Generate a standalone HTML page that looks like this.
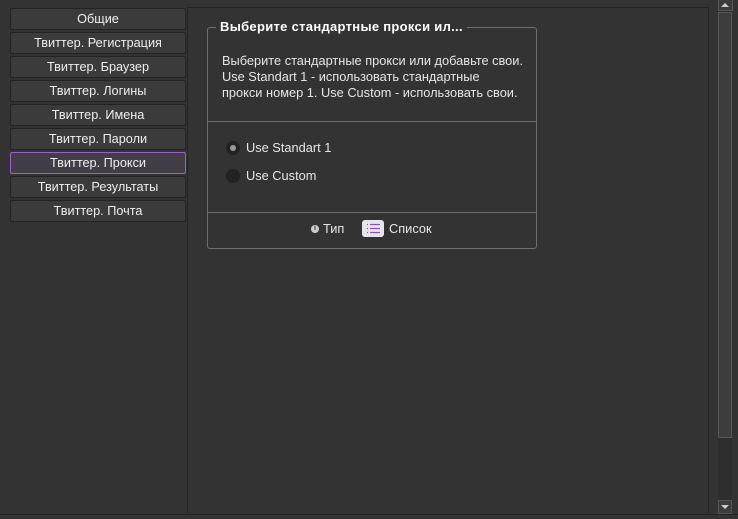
<!DOCTYPE html>
<html><head><meta charset="utf-8"><style>
body{margin:0;width:738px;height:519px;background:#333;overflow:hidden;position:relative;font-family:"Liberation Sans","DejaVu Sans",sans-serif;font-size:12px;color:#e6e6e6}
.a{position:absolute}
.btn{position:absolute;left:10px;width:174px;height:20px;background:#3b3b3b;border:1px solid #232323;border-radius:2px;text-align:center;line-height:20px;color:#eee;font-size:12.7px}
.sel{background:#433d48;border-color:#9b60c9}
</style></head><body>
<div class="a" style="left:187px;top:7px;width:1px;height:507px;background:#232323"></div>
<div class="a" style="left:187px;top:7px;width:521px;height:1px;background:#232323"></div>
<div class="a" style="left:708px;top:7px;width:1px;height:507px;background:#232323"></div>
<div class="a" style="left:0;top:514px;width:738px;height:1px;background:#232323"></div>
<div class="btn" style="top:8px">Общие</div>
<div class="btn" style="top:32px">Твиттер. Регистрация</div>
<div class="btn" style="top:56px">Твиттер. Браузер</div>
<div class="btn" style="top:80px">Твиттер. Логины</div>
<div class="btn" style="top:104px">Твиттер. Имена</div>
<div class="btn" style="top:128px">Твиттер. Пароли</div>
<div class="btn sel" style="top:152px">Твиттер. Прокси</div>
<div class="btn" style="top:176px">Твиттер. Результаты</div>
<div class="btn" style="top:200px">Твиттер. Почта</div>

<div class="a" style="left:207px;top:27px;width:328px;height:220px;border:1px solid #6e6e6e;border-radius:3px"></div>
<div class="a" style="left:216px;top:18px;padding:0 4px;background:#333;font-weight:bold;color:#fff;font-size:13px;letter-spacing:0.3px;line-height:18px">Выберите стандартные прокси ил...</div>
<div class="a" style="left:222px;top:53px;line-height:16px;font-size:12.8px;color:#e6e6e6">Выберите стандартные прокси или добавьте свои.<br>Use Standart 1 - использовать стандартные<br>прокси номер 1. Use Custom - использовать свои.</div>
<div class="a" style="left:208px;top:121px;width:328px;height:1px;background:#6e6e6e"></div>
<div class="a" style="left:226px;top:141px;width:14px;height:14px;border-radius:50%;background:#222"></div>
<div class="a" style="left:230px;top:145px;width:6px;height:6px;border-radius:50%;background:#999"></div>
<div class="a" style="left:246px;top:140px;font-size:12.8px;line-height:16px">Use Standart 1</div>
<div class="a" style="left:226px;top:169px;width:14px;height:14px;border-radius:50%;background:#222"></div>
<div class="a" style="left:246px;top:168px;font-size:12.8px;line-height:16px">Use Custom</div>
<div class="a" style="left:208px;top:212px;width:328px;height:1px;background:#6e6e6e"></div>
<div class="a" style="left:311px;top:225px;width:8px;height:8px;border-radius:50%;background:#ccc;color:#333;font-size:7px;line-height:8px;text-align:center;font-weight:bold">i</div>
<div class="a" style="left:323px;top:221px;font-size:12.8px;line-height:16px">Тип</div>
<div class="a" style="left:362px;top:220px;width:22px;height:17px;background:#e8e4ec;border-radius:3px">
<svg width="22" height="17"><g stroke="#8a4fc0" stroke-width="1.2"><line x1="5" y1="4.5" x2="6" y2="4.5"/><line x1="5" y1="8.5" x2="6" y2="8.5"/><line x1="5" y1="12.5" x2="6" y2="12.5"/><line x1="8" y1="4.5" x2="18" y2="4.5"/><line x1="8" y1="8.5" x2="18" y2="8.5"/><line x1="8" y1="12.5" x2="18" y2="12.5"/></g></svg></div>
<div class="a" style="left:389px;top:221px;font-size:12.8px;line-height:16px">Список</div>

<div class="a" style="left:718px;top:0;width:14px;height:514px;background:#2e2e2e"></div>
<div class="a" style="left:718px;top:0;width:13px;height:10px;background:#3c3c3c;border:1px solid #555;border-top:0"></div>
<div class="a" style="left:721px;top:3px;width:0;height:0;border-left:4px solid transparent;border-right:4px solid transparent;border-bottom:4px solid #ccc"></div>
<div class="a" style="left:718px;top:12px;width:12px;height:424px;background:#3d3d3d;border:1px solid #565656"></div>
<div class="a" style="left:718px;top:500px;width:12px;height:12px;background:#3c3c3c;border:1px solid #555"></div>
<div class="a" style="left:721px;top:505px;width:0;height:0;border-left:4px solid transparent;border-right:4px solid transparent;border-top:4px solid #ccc"></div>
</body></html>
